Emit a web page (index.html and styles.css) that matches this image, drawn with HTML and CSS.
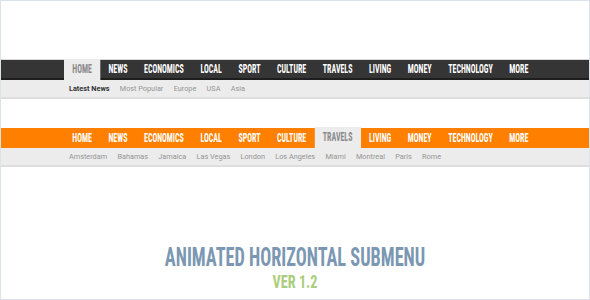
FILE: index.html
```html
<html>
  <head>
    <link rel="stylesheet" href="styles.css">
    <title>Animated Horizontal Submenu</title>
  </head>
  <body>
    <div class="frame">
      <div class="menu dark">
        <div class="bar">
          <ul class="main">
            <li class="active"><a href="#">Home</a></li>
            <li><a href="#">News</a></li>
            <li><a href="#">Economics</a></li>
            <li><a href="#">Local</a></li>
            <li><a href="#">Sport</a></li>
            <li><a href="#">Culture</a></li>
            <li><a href="#">Travels</a></li>
            <li><a href="#">Living</a></li>
            <li><a href="#">Money</a></li>
            <li><a href="#">Technology</a></li>
            <li><a href="#">More</a></li>
          </ul>
        </div>
        <ul class="sub">
          <li class="current"><a href="#">Latest News</a></li>
          <li><a href="#">Most Popular</a></li>
          <li><a href="#">Europe</a></li>
          <li><a href="#">USA</a></li>
          <li><a href="#">Asia</a></li>
        </ul>
      </div>

      <div class="menu orange">
        <div class="bar">
          <ul class="main">
            <li><a href="#">Home</a></li>
            <li><a href="#">News</a></li>
            <li><a href="#">Economics</a></li>
            <li><a href="#">Local</a></li>
            <li><a href="#">Sport</a></li>
            <li><a href="#">Culture</a></li>
            <li class="active"><a href="#">Travels</a></li>
            <li><a href="#">Living</a></li>
            <li><a href="#">Money</a></li>
            <li><a href="#">Technology</a></li>
            <li><a href="#">More</a></li>
          </ul>
        </div>
        <ul class="sub">
          <li><a href="#">Amsterdam</a></li>
          <li><a href="#">Bahamas</a></li>
          <li><a href="#">Jamaica</a></li>
          <li><a href="#">Las Vegas</a></li>
          <li><a href="#">London</a></li>
          <li><a href="#">Los Angeles</a></li>
          <li><a href="#">Miami</a></li>
          <li><a href="#">Montreal</a></li>
          <li><a href="#">Paris</a></li>
          <li><a href="#">Rome</a></li>
        </ul>
      </div>

      <div class="title">
        <h1>Animated Horizontal Submenu</h1>
        <h2>Ver 1.2</h2>
      </div>
    </div>
  </body>
</html>
```

FILE: styles.css
```css
body {
  margin: 0;
  background: #fff;
}

.frame {
  box-sizing: border-box;
  width: 590px;
  height: 300px;
  border: 1px solid #dbe2ea;
  padding-top: 58px;
  overflow: hidden;
}

ul {
  list-style: none;
  margin: 0;
  padding: 0;
  display: flex;
}

a {
  text-decoration: none;
}

.menu {
  margin-bottom: 28px;
}

/* main bar: the font is squeezed to look like a tall condensed display face */
.bar {
  height: 20px;
  border-top: 1px solid #d6d6d6;
}

.main {
  margin-left: 63px;
  width: max-content;
  transform: scaleX(0.66);
  transform-origin: left top;
}

.main li a {
  display: block;
  height: 20px;
  line-height: 21px;
  padding: 0 12.6px;
  font-family: "Roboto Condensed", "DejaVu Sans Condensed", sans-serif;
  font-weight: bold;
  font-size: 12px;
  text-transform: uppercase;
  color: #fff;
}

.dark .bar {
  background: #353535;
  border-bottom: 2px solid #1e1e1e;
  height: 18px;
}

.dark .main li a {
  height: 18px;
  line-height: 19px;
}

.orange .bar {
  background: #ff8000;
  border-top-color: #fff;
}

.main li.active a {
  background: #ececec;
  color: #8a8a8a;
  margin-top: -1px;
  height: 21px;
}

.dark .main li.active a {
  height: 21px;
  line-height: 21px;
}

.sub {
  height: 17px;
  padding-left: 68px;
  background: #ececec;
  border-bottom: 2px solid #dedede;
  gap: 10.3px;
}

.sub li a {
  display: block;
  line-height: 18px;
  font-family: Roboto, "Liberation Sans", sans-serif;
  font-size: 7.3px;
  color: #959595;
}

.sub li.current a {
  color: #333;
  font-weight: bold;
}

.title {
  text-align: center;
  padding-top: 49px;
  font-family: "Roboto Condensed", "DejaVu Sans Condensed", sans-serif;
  font-weight: bold;
  text-transform: uppercase;
}

.title h1 {
  margin: 0;
  font-size: 25px;
  line-height: 28px;
  color: #7b97b2;
  transform: scaleX(0.73);
}

.title h2 {
  margin: 0;
  font-size: 19px;
  line-height: 20px;
  color: #a9cd7b;
  transform: scaleX(0.75);
}
```
